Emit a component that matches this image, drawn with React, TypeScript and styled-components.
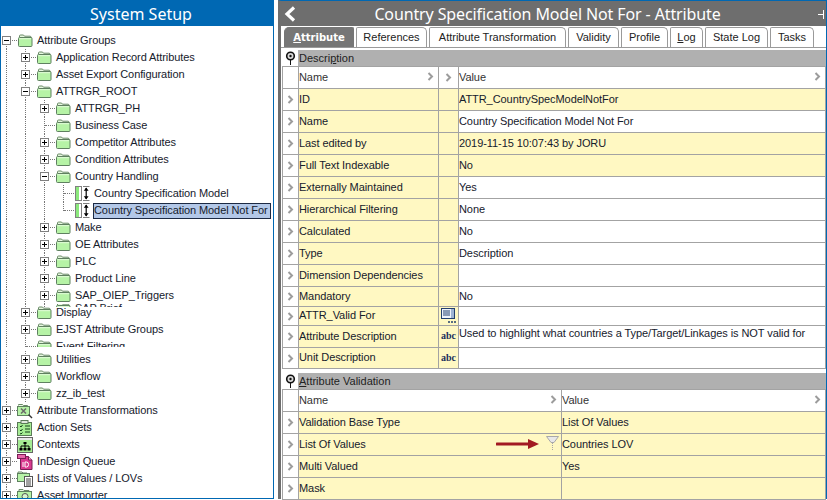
import React from "react";
import styled, { createGlobalStyle } from "styled-components";

const UI_FONT = `"Liberation Sans", Arial, sans-serif`;
const TITLE_FONT = `"Noto Sans", "Liberation Sans", sans-serif`;
const BLUE = "#0068b3";
const GRID = "#a3a3a3";
const YELLOW = "#fff8c2";

const Global = createGlobalStyle`
  html, body { margin: 0; padding: 0; background: #fff; }
  body { font-family: ${UI_FONT}; font-size: 11px; color: #16202c; }
`;

const Page = styled.div`
  display: flex;
  gap: 4px;
  width: 827px;
  height: 500px;
  overflow: hidden;
  background: #fff;
`;

const LeftPanel = styled.aside`
  width: 274px;
  height: 499px;
  box-sizing: border-box;
  border: 1px solid ${BLUE};
  display: flex;
  flex-direction: column;
  flex: none;
`;

const PanelTitle = styled.div`
  height: 25px;
  flex: none;
  background: ${BLUE};
  color: #fff;
  font-family: ${TITLE_FONT};
  font-size: 16px;
  line-height: 26px;
  text-align: center;
  padding-left: 8px;
`;

const Tree = styled.div`
  flex: 1;
  overflow: hidden;
  padding-top: 6px;
`;

const TreeRow = styled.div`
  display: flex;
  align-items: center;
  height: 17px;
  white-space: nowrap;
`;

const ClipRow = styled.div<{ $show: number; $height: number; $lift: number }>`
  height: ${(p) => p.$show}px;
  margin-bottom: ${(p) => p.$height - p.$show}px;
  overflow: hidden;
  & > div {
    margin-top: ${(p) => -p.$lift}px;
  }
`;

const Guide = styled.span`
  position: relative;
  flex: none;
  width: 19px;
  height: 17px;
  &::before {
    content: "";
    position: absolute;
    left: 5px;
    top: 0;
    bottom: 0;
    border-left: 1px dotted #777;
  }
`;

const Branch = styled.span<{ $last?: boolean; $noLine?: boolean }>`
  position: relative;
  flex: none;
  width: 17px;
  height: 17px;
  &::before {
    content: "";
    position: absolute;
    left: 5px;
    top: ${(p) => (p.$noLine ? "9px" : "0")};
    bottom: ${(p) => (p.$last ? "8px" : "0")};
    border-left: 1px dotted #777;
  }
  &::after {
    content: "";
    position: absolute;
    left: 6px;
    width: 10px;
    top: 8px;
    border-top: 1px dotted #777;
  }
`;

const Toggle = styled.span<{ $open: boolean }>`
  position: absolute;
  z-index: 1;
  left: 1px;
  top: 4px;
  width: 9px;
  height: 9px;
  box-sizing: border-box;
  border: 1px solid #808080;
  background:
    linear-gradient(#000, #000) center / 5px 1px no-repeat,
    ${(p) => (p.$open ? "none" : "linear-gradient(#000, #000) center / 1px 5px no-repeat")},
    #fff;
`;

const IconSlot = styled.span<{ $nudge?: boolean }>`
  flex: none;
  width: 18px;
  display: flex;
  align-items: center;
  svg {
    display: block;
    margin-left: ${(p) => (p.$nudge ? "-1px" : "0")};
  }
`;

const TreeLabel = styled.span<{ $selected?: boolean }>`
  height: 16px;
  line-height: 14px;
  letter-spacing: -0.09px;
  box-sizing: border-box;
  padding: 0 2px 0 ${(p) => (p.$selected ? "0" : "1px")};
  ${(p) => p.$selected && `background: #b3c8e8; border: 1px solid #1c2a44; line-height: 13px;`}
`;

const RightPanel = styled.main`
  flex: 1;
  min-width: 0;
  height: 499px;
  box-sizing: border-box;
  border-top: 1px solid ${BLUE};
  border-right: 1px solid ${BLUE};
  border-left: 3px solid #6e6e6e;
  display: flex;
  flex-direction: column;
`;

const TitleBar = styled.div`
  position: relative;
  height: 25px;
  flex: none;
  background: #6e6e6e;
  color: #fff;
  font-family: ${TITLE_FONT};
  font-size: 16px;
  letter-spacing: -0.12px;
  line-height: 26px;
  text-align: center;
  padding-right: 12px;
`;

const BackIcon = styled.svg`
  position: absolute;
  left: 3px;
  top: 5px;
`;

const PinIcon = styled.svg`
  position: absolute;
  right: 0;
  top: 9px;
`;

const TabStrip = styled.div`
  display: flex;
  align-items: flex-end;
  height: 22px;
  flex: none;
  box-sizing: border-box;
  padding-left: 3px;
  gap: 2px;
  border-bottom: 1px solid #9a9a9a;
`;

const Tab = styled.div<{ $w: number; $active?: boolean }>`
  width: ${(p) => p.$w}px;
  height: 20px;
  box-sizing: border-box;
  text-align: center;
  line-height: 19px;
  font-size: 11px;
  color: #222;
  background: #fff;
  border: 1px solid #9a9a9a;
  border-bottom: none;
  border-top-right-radius: 5px;
  border-top-left-radius: 2px;
  ${(p) =>
    p.$active &&
    `background: #767676; color: #fff; font-family: "DejaVu Sans", sans-serif; font-size: 10px; font-weight: 700; border-color: #767676; border-radius: 5px 2px 0 0;`}
`;

const Section = styled.section<{ $gap: number }>`
  margin-top: ${(p) => p.$gap}px;
  padding-left: 1px;
`;

const SectionHead = styled.div`
  display: flex;
  height: 16px;
`;

const PinSlot = styled.span`
  flex: none;
  width: 16px;
  display: flex;
  align-items: center;
  justify-content: center;
`;

const SectionTitle = styled.div`
  flex: 1;
  background: #b0b0b0;
  color: #222;
  line-height: 16px;
  padding-left: 1px;
`;

const Table = styled.div`
  border-top: 1px solid ${GRID};
  border-left: 1px solid ${GRID};
`;

const Row = styled.div<{ $cols: string; $h: number }>`
  display: grid;
  grid-template-columns: ${(p) => p.$cols};
  height: ${(p) => p.$h}px;
`;

const Cell = styled.div<{ $fill?: boolean; $top?: boolean }>`
  display: flex;
  align-items: ${(p) => (p.$top ? "flex-start" : "center")};
  min-width: 0;
  box-sizing: border-box;
  padding-bottom: 2px;
  border-right: 1px solid ${GRID};
  border-bottom: 1px solid ${GRID};
  background: ${(p) => (p.$fill ? YELLOW : "#fff")};
  white-space: nowrap;
  overflow: hidden;
  line-height: 14px;
  letter-spacing: -0.07px;
`;

const ArrowCell = styled(Cell)`
  justify-content: center;
  padding-right: 1px;
  padding-bottom: 0;
  background: #fff;
`;

const IconCell = styled(Cell)`
  justify-content: center;
  padding-bottom: 1px;
  background: ${YELLOW};
`;

const HeaderCell = styled(Cell)`
  justify-content: space-between;
  color: #333;
  padding-right: 4px;
`;

const Mark = styled.div`
  display: flex;
  align-items: center;
  gap: 6px;
  margin-left: auto;
  margin-right: 2px;
`;

const Chevron = () => (
  <svg width="7" height="9" viewBox="0 0 7 9">
    <path d="M1.5 1l3.5 3.5L1.5 8" fill="none" stroke="#9c9c9c" strokeWidth="2" />
  </svg>
);

const Folder = () => (
  <svg width="15" height="13" viewBox="0 0 15 13">
    <path d="M1.5 3V2q0-1 1-1h3l1 1.2h5.5q1 0 1 1V4" fill="#e6f7df" stroke="#6a8a67" />
    <rect x="0.5" y="3.5" width="13.5" height="9" rx="1" fill="#b6f3a6" stroke="#5f8060" />
    <path d="M1.5 4.7h11.5" stroke="#e2fbd9" />
  </svg>
);

const AttrIcon = () => (
  <svg width="15" height="15" viewBox="0 0 15 15">
    <rect x="0.5" y="0.5" width="6" height="14" fill="#fff" stroke="#808080" />
    <rect x="1" y="1" width="3" height="13" fill="#8be87c" />
    <path d="M8 .5h6.5M8 14.5h6.5" stroke="#808080" />
    <path d="M11.2 2v11" stroke="#000" strokeWidth="1.2" />
    <path d="M8.8 4.8l2.4-3.3 2.4 3.3zM8.8 10.2l2.4 3.3 2.4-3.3z" fill="#000" />
  </svg>
);

const TransformIcon = () => (
  <svg width="16" height="16" viewBox="0 0 16 16">
    <path d="M1.5 2.5V1.5h4l1 1h4v1" fill="#e6f7df" stroke="#6a8a67" />
    <rect x="0.5" y="3.5" width="12" height="9" fill="#b6f3a6" stroke="#5f8060" />
    <path d="M4 5.5l5 5M9 5.5l-5 5" stroke="#6a6a6a" strokeWidth="1.5" />
    <path d="M11.5 11.5l3.5 3.5" stroke="#333" strokeWidth="1.4" />
  </svg>
);

const ActionIcon = () => (
  <svg width="16" height="16" viewBox="0 0 16 16">
    <rect x="0.5" y="2.5" width="14" height="13" fill="#a6ec94" stroke="#5a7a58" />
    <rect x="4" y="0.5" width="7" height="3" fill="#dfe8dc" stroke="#5a7a58" />
    <path d="M3 6l1 1 1.5-2M3 10l1 1 1.5-2M3 13.5l1 .5 1.5-1.5" fill="none" stroke="#14401a" />
    <path d="M8 6h5M8 9h5M8 12h5" stroke="#14401a" />
  </svg>
);

const ContextIcon = () => (
  <svg width="16" height="16" viewBox="0 0 16 16">
    <rect x="0.5" y="0.5" width="15" height="15" fill="#a6ec94" stroke="#666" />
    <rect x="1" y="1" width="14" height="2" fill="#e8e8e8" />
    <path d="M8 6v3M4 11V9h8v2M8 9v2" fill="none" stroke="#000" />
    <rect x="6.5" y="5" width="3" height="2" fill="#000" />
    <rect x="2.5" y="11" width="3" height="2.5" fill="#000" />
    <rect x="6.5" y="11" width="3" height="2.5" fill="#000" />
    <rect x="10.5" y="11" width="3" height="2.5" fill="#000" />
  </svg>
);

const InDesignIcon = () => (
  <svg width="16" height="16" viewBox="0 0 16 16">
    <path d="M3.5 2.5h8l3.5 3.5v9.5h-11.5z" fill="#d9398f" stroke="#7a1e55" />
    <path d="M11.5 2.5v3.5h3.5" fill="#f7b7d8" stroke="#7a1e55" />
    <rect x="0.5" y="0.5" width="8" height="4" fill="#e765a9" stroke="#7a1e55" />
    <path d="M6 8v5M8 8v5h1.5q2 0 2-2.5T9.5 8H8" fill="none" stroke="#fff" />
  </svg>
);

const ListsIcon = () => (
  <svg width="16" height="16" viewBox="0 0 16 16">
    <path d="M1 2V1h4l1 1h4v2" fill="#e6f7df" stroke="#6a8a67" />
    <rect x="0.5" y="2.5" width="12" height="8" fill="#b6f3a6" stroke="#5f8060" />
    <rect x="7.5" y="5.5" width="8" height="10" fill="#fff" stroke="#555" />
    <path d="M9 8h5M9 10h5M9 12h5M9 14h5" stroke="#444" />
  </svg>
);

const ImporterIcon = () => (
  <svg width="16" height="15" viewBox="0 0 16 15">
    <path d="M2 3V1.5h4l1 1h5V4" fill="#e6f7df" stroke="#6a8a67" />
    <rect x="0.5" y="3.5" width="14" height="10" fill="#b6f3a6" stroke="#5f8060" />
    <circle cx="8" cy="8.5" r="3" fill="#d9f5cf" stroke="#555" />
  </svg>
);

const SectionPin = () => (
  <svg width="11" height="14" viewBox="0 0 11 14">
    <circle cx="5.5" cy="5" r="3.8" fill="#d8d8d8" stroke="#111" strokeWidth="1.6" />
    <circle cx="5.5" cy="5" r="1.2" fill="#111" />
    <path d="M5.5 9v5" stroke="#111" />
  </svg>
);

const NoteIcon = () => (
  <svg width="15" height="17" viewBox="0 0 15 17">
    <rect x="0.5" y="1.5" width="13" height="10" fill="#eef3fb" stroke="#23406e" />
    <path d="M2 4h7M2 6h7M2 8h7" stroke="#23406e" />
    <rect x="10" y="2" width="3" height="9" fill="#9fb4d4" />
    <path d="M7 15h2M10 15h2M13 15h2" stroke="#23406e" strokeWidth="1.4" />
  </svg>
);

const AbcMark = styled.span`
  font-family: "Liberation Serif", serif;
  font-size: 10px;
  font-weight: 700;
  color: #1b2f5c;
  line-height: 12px;
`;

const RedArrow = () => (
  <svg width="44" height="10" viewBox="0 0 44 10">
    <path d="M1 5h33" stroke="#a21a22" strokeWidth="3" strokeLinecap="round" />
    <path d="M32 0l11 5-11 5z" fill="#a21a22" />
  </svg>
);

const Funnel = () => (
  <svg width="13" height="15" viewBox="0 0 13 15">
    <path d="M.5.5h12L8 6.5h-3z" fill="#e8e8e8" stroke="#a8a8a8" />
    <path d="M6.5 7v8" stroke="#a8a8a8" strokeDasharray="1 1" />
  </svg>
);

type Node = {
  label: string;
  level: number;
  toggle?: "open" | "closed";
  icon?: React.ReactNode;
  nudge?: boolean;
  last?: boolean;
  selected?: boolean;
  noLine?: boolean;
  clip?: { show: number; height: number; lift: number };
};

const nodes: Node[] = [
  { label: "Attribute Groups", level: 0, toggle: "open", noLine: true },
  { label: "Application Record Attributes", level: 1, toggle: "closed" },
  { label: "Asset Export Configuration", level: 1, toggle: "closed" },
  { label: "ATTRGR_ROOT", level: 1, toggle: "open" },
  { label: "ATTRGR_PH", level: 2, toggle: "closed" },
  { label: "Business Case", level: 2 },
  { label: "Competitor Attributes", level: 2, toggle: "closed" },
  { label: "Condition Attributes", level: 2, toggle: "closed" },
  { label: "Country Handling", level: 2, toggle: "open" },
  { label: "Country Specification Model", level: 3, icon: <AttrIcon /> },
  { label: "Country Specification Model Not For", level: 3, icon: <AttrIcon />, last: true, selected: true },
  { label: "Make", level: 2, toggle: "closed" },
  { label: "OE Attributes", level: 2, toggle: "closed" },
  { label: "PLC", level: 2, toggle: "closed" },
  { label: "Product Line", level: 2, toggle: "closed" },
  { label: "SAP_OIEP_Triggers", level: 2, toggle: "closed" },
  { label: "SAP Brief", level: 2, clip: { show: 3, height: 0, lift: 4 } },
  { label: "Display", level: 1, toggle: "closed" },
  { label: "EJST Attribute Groups", level: 1, toggle: "closed" },
  { label: "Event Filtering", level: 1, clip: { show: 9, height: 13, lift: 0 } },
  { label: "Utilities", level: 1, toggle: "closed" },
  { label: "Workflow", level: 1, toggle: "closed" },
  { label: "zz_ib_test", level: 1, toggle: "closed" },
  { label: "Attribute Transformations", level: 0, toggle: "closed", icon: <TransformIcon />, nudge: true },
  { label: "Action Sets", level: 0, toggle: "closed", icon: <ActionIcon />, nudge: true },
  { label: "Contexts", level: 0, toggle: "closed", icon: <ContextIcon />, nudge: true },
  { label: "InDesign Queue", level: 0, toggle: "closed", icon: <InDesignIcon />, nudge: true },
  { label: "Lists of Values / LOVs", level: 0, toggle: "closed", icon: <ListsIcon />, nudge: true },
  { label: "Asset Importer", level: 0, toggle: "closed", icon: <ImporterIcon />, nudge: true },
];

const TreeItem = ({ node }: { node: Node }) => {
  const row = (
    <TreeRow>
      {Array.from({ length: node.level }, (_, i) => (
        <Guide key={i} />
      ))}
      <Branch $last={node.level === 3 && node.last} $noLine={node.noLine}>
        {node.toggle && <Toggle $open={node.toggle === "open"} />}
      </Branch>
      <IconSlot $nudge={node.nudge}>{node.icon ?? <Folder />}</IconSlot>
      <TreeLabel $selected={node.selected}>{node.label}</TreeLabel>
    </TreeRow>
  );
  if (!node.clip) return row;
  return (
    <ClipRow $show={node.clip.show} $height={node.clip.height} $lift={node.clip.lift}>
      {row}
    </ClipRow>
  );
};

const MAIN_COLS = "16px 140px 20px 1fr";
const VALID_COLS = "16px 263px 1fr";

type Attr = {
  name: string;
  value?: string;
  fill?: boolean;
  h?: number;
  icon?: React.ReactNode;
  top?: boolean;
};

const attrs: Attr[] = [
  { name: "ID", value: "ATTR_CountrySpecModelNotFor", fill: true },
  { name: "Name", value: "Country Specification Model Not For" },
  { name: "Last edited by", value: "2019-11-15 10:07:43 by JORU", fill: true },
  { name: "Full Text Indexable", value: "No", fill: true },
  { name: "Externally Maintained", value: "Yes" },
  { name: "Hierarchical Filtering", value: "None" },
  { name: "Calculated", value: "No" },
  { name: "Type", value: "Description" },
  { name: "Dimension Dependencies" },
  { name: "Mandatory", value: "No", h: 20 },
  { name: "ATTR_Valid For", h: 19, icon: <NoteIcon /> },
  {
    name: "Attribute Description",
    value: "Used to highlight what countries a Type/Target/Linkages is NOT valid for",
    icon: <AbcMark>abc</AbcMark>,
    top: true,
  },
  { name: "Unit Description", h: 21, icon: <AbcMark>abc</AbcMark> },
];

const validation = [
  { name: "Validation Base Type", value: "List Of Values" },
  { name: "List Of Values", value: "Countries LOV", marked: true },
  { name: "Multi Valued", value: "Yes" },
  { name: "Mask", value: "" },
];

const tabs: { w: number; label: React.ReactNode; active?: boolean }[] = [
  { w: 70, active: true, label: <><u>A</u>ttribute</> },
  { w: 71, label: "References" },
  { w: 137, label: "Attribute Transformation" },
  { w: 51, label: "Validity" },
  { w: 47, label: "Profile" },
  { w: 33, label: <><u>L</u>og</> },
  { w: 63, label: "State Log" },
  { w: 44, label: "Tasks" },
];

const App = () => (
  <Page>
    <Global />
    <LeftPanel>
      <PanelTitle>System Setup</PanelTitle>
      <Tree>
        {nodes.map((n) => (
          <TreeItem key={n.label} node={n} />
        ))}
      </Tree>
    </LeftPanel>
    <RightPanel>
      <TitleBar>
        <BackIcon width="12" height="16" viewBox="0 0 12 16">
          <path d="M10 1.5L3 8l7 6.5" fill="none" stroke="#fff" strokeWidth="3.2" />
        </BackIcon>
        Country Specification Model Not For - Attribute
        <PinIcon width="8" height="9" viewBox="0 0 8 9">
          <path d="M0 4.5h5M5.5 0v9" stroke="#fff" />
        </PinIcon>
      </TitleBar>
      <TabStrip>
        {tabs.map((t, i) => (
          <Tab key={i} $w={t.w} $active={t.active}>
            {t.label}
          </Tab>
        ))}
      </TabStrip>
      <Section $gap={2}>
        <SectionHead>
          <PinSlot>
            <SectionPin />
          </PinSlot>
          <SectionTitle>
            Descri<u>p</u>tion
          </SectionTitle>
        </SectionHead>
        <Table>
          <Row $cols={MAIN_COLS} $h={22}>
            <ArrowCell />
            <HeaderCell>
              Name
              <Chevron />
            </HeaderCell>
            <ArrowCell>
              <Chevron />
            </ArrowCell>
            <HeaderCell>
              Value
              <Chevron />
            </HeaderCell>
          </Row>
          {attrs.map((a) => (
            <Row key={a.name} $cols={MAIN_COLS} $h={a.h ?? 22}>
              <ArrowCell>
                <Chevron />
              </ArrowCell>
              <Cell $fill>{a.name}</Cell>
              <IconCell>{a.icon}</IconCell>
              <Cell $fill={a.fill} $top={a.top}>
                {a.value}
              </Cell>
            </Row>
          ))}
        </Table>
      </Section>
      <Section $gap={4}>
        <SectionHead>
          <PinSlot>
            <SectionPin />
          </PinSlot>
          <SectionTitle>
            <u>A</u>ttribute Validation
          </SectionTitle>
        </SectionHead>
        <Table>
          <Row $cols={VALID_COLS} $h={22}>
            <ArrowCell />
            <HeaderCell>
              Name
              <Chevron />
            </HeaderCell>
            <HeaderCell>
              Value
              <Chevron />
            </HeaderCell>
          </Row>
          {validation.map((v) => (
            <Row key={v.name} $cols={VALID_COLS} $h={22}>
              <ArrowCell>
                <Chevron />
              </ArrowCell>
              <Cell $fill>
                {v.name}
                {v.marked && (
                  <Mark>
                    <RedArrow />
                    <Funnel />
                  </Mark>
                )}
              </Cell>
              <Cell $fill>{v.value}</Cell>
            </Row>
          ))}
        </Table>
      </Section>
    </RightPanel>
  </Page>
);

export default App;
